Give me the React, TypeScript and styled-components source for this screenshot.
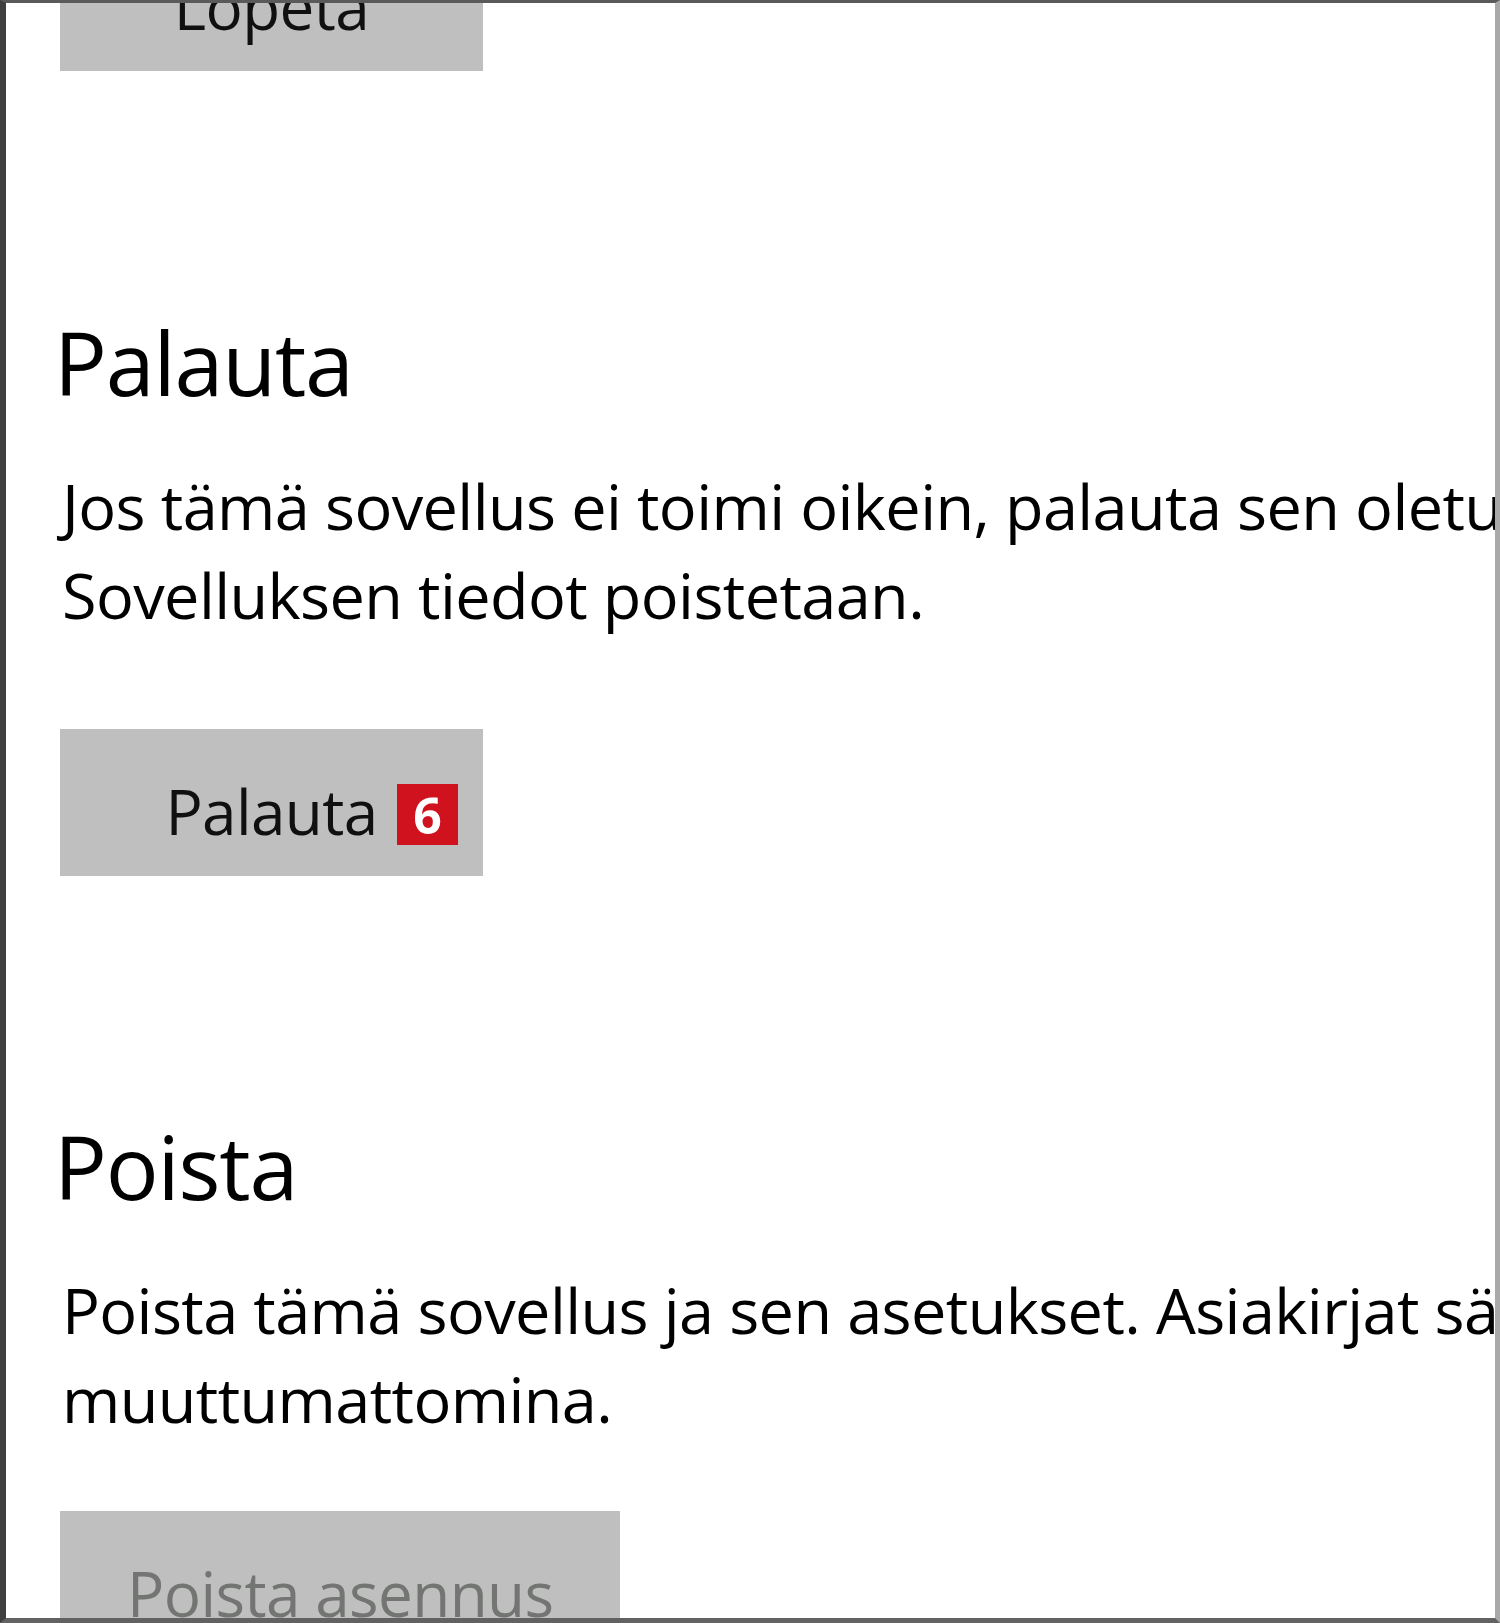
import React from "react";
import styled, { createGlobalStyle } from "styled-components";

const GlobalStyle = createGlobalStyle`
  html, body {
    margin: 0;
    padding: 0;
    background: #ffffff;
  }
`;

const Frame = styled.div`
  box-sizing: border-box;
  width: 1500px;
  height: 1623px;
  overflow: hidden;
  background: #ffffff;
  border-left: 6px solid #3f3f3f;
  border-top: 3px solid #5a5a5a;
  border-bottom: 5px solid #626262;
  border-right: 5px solid #a9a9a9;
  font-family: "Open Sans", "Noto Sans", sans-serif;
  color: #000000;
`;

const Content = styled.div`
  padding-left: 54px;
  white-space: nowrap;
`;

const Section = styled.section<{ $gap: number }>`
  margin-top: ${(p) => p.$gap}px;
`;

const Heading = styled.h2`
  margin: 0 0 0 -6px;
  font-size: 88px;
  font-weight: 400;
  line-height: 100px;
  letter-spacing: -1.2px;
`;

const Body = styled.p`
  margin: 49px 0 0 2px;
  font-size: 63px;
  line-height: 89px;
  letter-spacing: -0.6px;
`;

const Button = styled.div<{ $top?: number; $disabled?: boolean }>`
  position: relative;
  display: flex;
  align-items: center;
  justify-content: center;
  box-sizing: border-box;
  width: max-content;
  min-width: 423px;
  height: 147px;
  padding: 16px 67px 0;
  margin-top: ${(p) => p.$top ?? 0}px;
  background: #bebfbe;
  font-size: 62px;
  letter-spacing: -0.6px;
  color: ${(p) => (p.$disabled ? "#737573" : "#101010")};
`;

const Badge = styled.span`
  position: absolute;
  left: 337px;
  top: 55px;
  width: 61px;
  height: 61px;
  display: flex;
  align-items: center;
  justify-content: center;
  background: #d0111e;
  color: #ffffff;
  font-weight: 700;
  font-size: 50px;
  line-height: 1;
  letter-spacing: 0;
`;

export default function App() {
  return (
    <>
      <GlobalStyle />
      <Frame>
        <Content>
          <Button $top={-79}>Lopeta</Button>

          <Section $gap={241}>
            <Heading>Palauta</Heading>
            <Body>
              Jos tämä sovellus ei toimi oikein, palauta sen oletusasetukset.
              <br />
              Sovelluksen tiedot poistetaan.
            </Body>
            <Button $top={90}>
              Palauta
              <Badge>6</Badge>
            </Button>
          </Section>

          <Section $gap={240}>
            <Heading>Poista</Heading>
            <Body>
              Poista tämä sovellus ja sen asetukset. Asiakirjat säilyvät
              <br />
              muuttumattomina.
            </Body>
            <Button $top={68} $disabled>
              Poista asennus
            </Button>
          </Section>
        </Content>
      </Frame>
    </>
  );
}
